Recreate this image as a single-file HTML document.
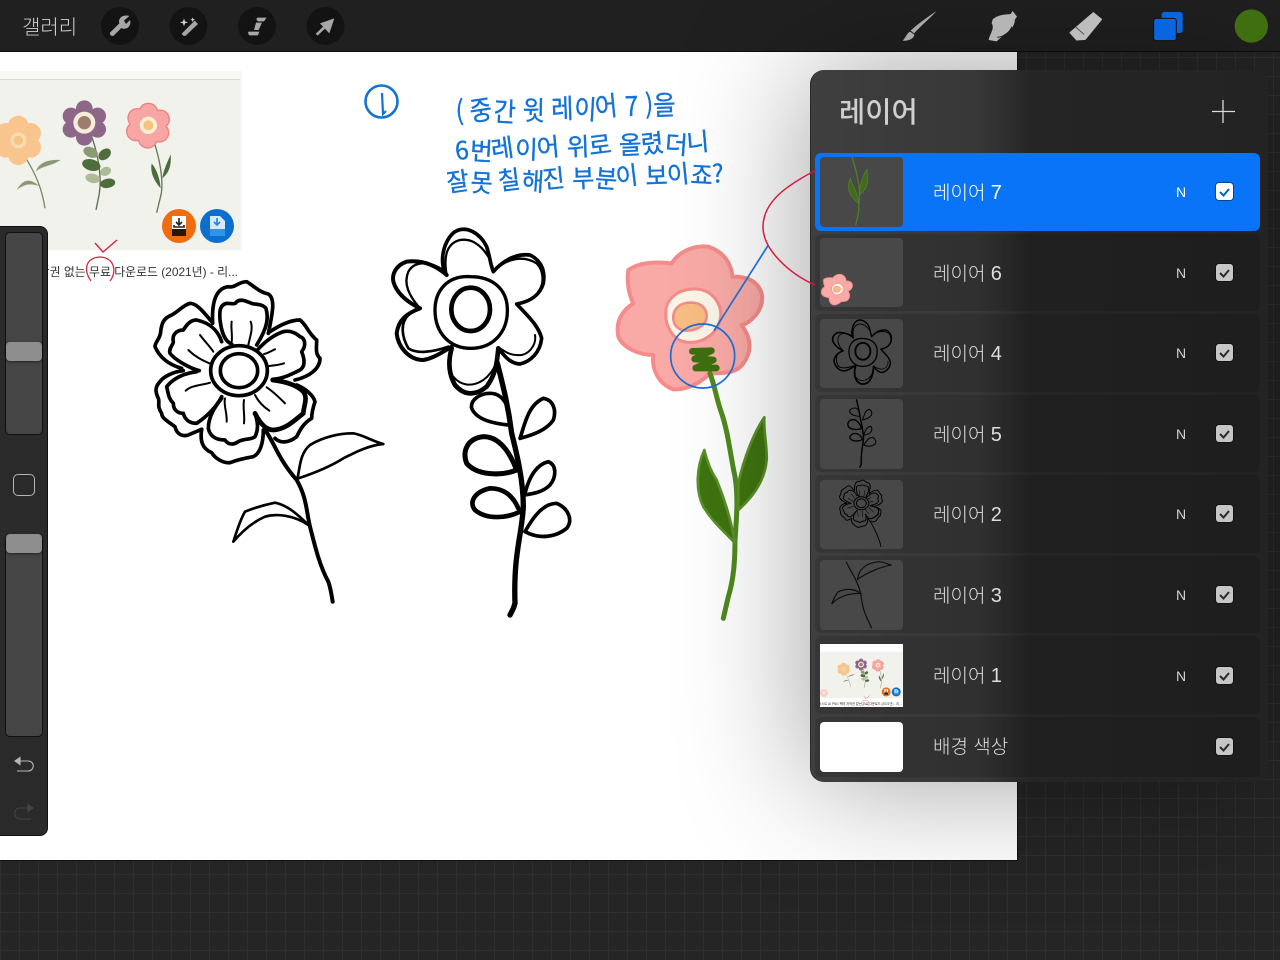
<!DOCTYPE html>
<html lang="ko">
<head>
<meta charset="utf-8">
<title>레이어</title>
<style>
html,body{margin:0;padding:0;width:1280px;height:960px;overflow:hidden}
body{position:relative;background-color:#252525;background-image:linear-gradient(#2f2f2f 1px,transparent 1px),linear-gradient(90deg,#2f2f2f 1px,transparent 1px);background-size:19px 19px;font-family:"Liberation Sans","Noto Sans CJK KR",sans-serif}
.abs{position:absolute}
#canvas{left:0;top:52px;width:1017px;height:808px;background:#fff;box-shadow:0 0 0 1px #111}
#art{left:0;top:0;width:1280px;height:960px}
#top{left:0;top:0;width:1280px;height:52px;background:#202020;border-bottom:1px solid #0c0c0c;box-sizing:border-box}
#gal{left:22px;top:12px;font:300 20px/28px "Noto Sans CJK KR",sans-serif;color:#d0d0d0}
#tool{left:0;top:227px;width:47px;height:608px;background:#2a2a2a;border-radius:0 7px 7px 0;box-shadow:0 0 0 1px #111}
.sl{position:absolute;left:5px;width:36px;height:201px;background:#454545;border:1px solid #101010;border-radius:5px}
.th{position:absolute;left:6px;width:36px;height:19px;background:#8d8d8d;border-radius:4px;box-shadow:0 1px 2px rgba(0,0,0,.5)}
#sq{position:absolute;left:13px;top:247px;width:20px;height:20px;border:1px solid #b5b5b5;border-radius:5px}
#panel{left:810px;top:70px;width:458px;height:712px;border-radius:14px;background:linear-gradient(90deg,#3f3f3f 0,#3b3b3b 18%,#383838 36%,#303030 42%,#252525 48%,#232323 100%);box-shadow:inset 1px 0 0 rgba(0,0,0,.35),0 0 240px rgba(0,0,0,.38)}
#ptitle{left:839px;top:91px;font:500 28.500px/40px "Noto Sans CJK KR",sans-serif;color:#cfcfcf}
.row{position:absolute;left:815px;width:445px;border-radius:6px;background:rgba(0,0,0,.13)}
.row.on{background:#0a74f8}
.tb{position:absolute;left:820px;width:83px;border-radius:4px;background:#484848}
.lb{position:absolute;left:933px;font:300 19px/28px "Liberation Sans","Noto Sans CJK KR",sans-serif;color:#dedede;white-space:pre}
.lb b{font-weight:400;font-size:20px}
.nn{position:absolute;left:1176px;font:14px/18px "Liberation Sans",sans-serif;color:#d2d2d2}
.cb{position:absolute;left:1216px;width:17px;height:17px;border-radius:3px;background:#c6c6c6;box-shadow:0 0 0 1px rgba(0,0,0,.4)}
#over{left:0;top:0;width:1280px;height:960px;pointer-events:none}
</style>
</head>
<body>
<div class="abs" id="canvas"></div>

<svg class="abs" id="art" viewBox="0 0 1280 960" xmlns="http://www.w3.org/2000/svg">
<defs>
<clipPath id="cvclip"><rect x="0" y="52" width="1017" height="808"/></clipPath>
<clipPath id="t1clip"><rect x="820" y="644" width="83" height="63"/></clipPath>
<g id="photo">
  <rect x="-70" y="71" width="312" height="184" fill="#f8f8f6"/>
  <rect x="-70" y="80" width="310" height="170" fill="#f2f2ec"/>
  <rect x="-70" y="79" width="310" height="1" fill="#ddd8cf"/>
  <g transform="translate(0,60) scale(.33333)">
    <path d="M78,295C105,340 125,380 135,445" stroke="#7b8a64" stroke-width="4" fill="none"/>
    <path d="M108,335C115,310 140,298 182,300C150,320 125,318 108,335Z" fill="#8b9a72"/>
    <path d="M117,378C90,352 68,358 50,390C75,370 95,370 117,378Z" fill="#8b9a72"/>
    <g fill="#f8c58f">
      <circle cx="55" cy="198" r="31"/><circle cx="92" cy="220" r="31"/><circle cx="92" cy="262" r="31"/><circle cx="55" cy="284" r="31"/><circle cx="18" cy="262" r="31"/><circle cx="18" cy="220" r="31"/><circle cx="55" cy="241" r="40"/>
    </g>
    <circle cx="55" cy="241" r="24" fill="#fbdcb0"/><circle cx="55" cy="241" r="14" fill="#f8c486"/>
    <path d="M277,235C295,290 305,350 298,400L288,450" stroke="#5d6e4a" stroke-width="4" fill="none"/>
    <ellipse cx="272" cy="277" rx="23" ry="15" fill="#8a9a72" transform="rotate(25 272 277)"/>
    <ellipse cx="314" cy="283" rx="21" ry="15" fill="#4f6c3c" transform="rotate(-40 314 283)"/>
    <ellipse cx="274" cy="315" rx="28" ry="17" fill="#4f6c3c" transform="rotate(15 274 315)"/>
    <ellipse cx="317" cy="334" rx="17" ry="13" fill="#aebb98" transform="rotate(-25 317 334)"/>
    <ellipse cx="278" cy="355" rx="22" ry="14" fill="#aebb98" transform="rotate(12 278 355)"/>
    <ellipse cx="323" cy="370" rx="23" ry="14" fill="#4f6c3c" transform="rotate(-10 323 370)"/>
    <g fill="#8d6688">
      <circle cx="253" cy="146" r="25"/><circle cx="293" cy="168" r="25"/><circle cx="293" cy="208" r="25"/><circle cx="253" cy="232" r="25"/><circle cx="213" cy="208" r="25"/><circle cx="213" cy="168" r="25"/><circle cx="253" cy="188" r="38"/>
    </g>
    <circle cx="253" cy="188" r="33" fill="#f6ecdc"/><circle cx="253" cy="188" r="20" fill="#9d7d6e"/>
    <path d="M462,245C480,300 490,360 484,400L470,458" stroke="#67784f" stroke-width="4" fill="none"/>
    <path d="M487,355C490,330 505,300 512,283C515,320 505,340 487,355Z" fill="#4a6b3b"/>
    <path d="M482,385C460,360 450,335 455,310C472,330 480,360 482,385Z" fill="#4a6b3b"/>
    <g fill="#ef8181">
      <circle cx="445" cy="158" r="30"/><circle cx="480" cy="178" r="30"/><circle cx="478" cy="218" r="30"/><circle cx="443" cy="236" r="30"/><circle cx="408" cy="214" r="30"/><circle cx="412" cy="174" r="30"/>
    </g>
    <g fill="#f8a6a4">
      <circle cx="445" cy="158" r="26"/><circle cx="480" cy="178" r="26"/><circle cx="478" cy="218" r="26"/><circle cx="443" cy="236" r="26"/><circle cx="408" cy="214" r="26"/><circle cx="412" cy="174" r="26"/>
      <circle cx="445" cy="196" r="36"/>
    </g>
    <circle cx="445" cy="196" r="26" fill="#fbefd8"/><circle cx="445" cy="196" r="15" fill="#f8c27f"/>
  </g>
  <circle cx="179" cy="226" r="17" fill="#ef6c10"/>
  <path d="M172,216h14v19h-14z" fill="#fff"/><rect x="172" y="229" width="14" height="7" fill="#2a1608"/>
  <path d="M179,218v6m-3,-2l3,3l3,-3M174,225v2h10v-2" stroke="#222" stroke-width="1.600" fill="none"/>
  <circle cx="217" cy="226" r="17" fill="#0a6fce"/>
  <path d="M210,216h10l5,5v15h-15z" fill="#d4e9fb"/><rect x="210" y="229" width="15" height="7" fill="#2a95ea"/>
  <path d="M217,218v6m-3,-2l3,3l3,-3" stroke="#1f84d9" stroke-width="1.600" fill="none"/>
  <rect x="-70" y="250" width="312" height="40" fill="#fff"/>
  <text x="238" y="276" text-anchor="end" font-family="'Liberation Sans','Noto Sans CJK KR',sans-serif" font-size="11.900" fill="#333">무료 꽃 일러스트 AI PNG 벡터 저작권 없는 무료 다운로드 (2021년) - 리...</text>
  <path d="M91,281C84,272 84,258 100,257C115,258 117,272 110,281" stroke="#d9263c" stroke-width="1.300" fill="none"/>
  <path d="M95,243L103,252L117,240" stroke="#d9263c" stroke-width="1.400" fill="none"/>
</g>

<g id="f1head" fill="none" stroke="#000" stroke-linecap="round" stroke-linejoin="round" stroke-width="11">
  <path d="M218,160C215,100 225,55 265,50C285,55 295,35 320,35C345,50 355,65 385,72C405,85 400,120 385,190"/>
  <path d="M275,222C255,215 245,190 240,150C238,120 240,105 260,100C275,100 285,105 290,95C305,85 320,95 335,100C350,105 365,100 378,115C385,140 385,170 350,225"/>
  <path d="M215,155C190,125 170,100 150,100C130,105 115,125 95,135C70,145 65,160 62,185C62,205 45,215 45,230C60,265 90,285 125,295"/>
  <path d="M245,215C235,185 215,160 170,150C150,150 140,165 130,180C110,180 95,195 100,215C100,225 85,235 90,250C105,270 150,295 178,302"/>
  <path d="M390,185C420,165 450,150 480,150C500,165 505,190 530,210C530,235 525,250 540,265C540,295 510,320 465,330"/>
  <path d="M352,240C375,215 400,195 430,185C450,180 470,190 480,200C495,205 500,225 485,245C495,270 495,290 480,300C450,315 430,325 398,328"/>
  <path d="M130,302C100,305 70,320 60,335C45,350 45,365 55,385C60,395 50,410 65,430C65,445 85,455 105,470C110,495 130,500 145,495L185,478"/>
  <path d="M170,305C130,310 100,325 80,350C85,370 85,385 100,400C100,425 120,430 130,430C135,450 150,460 170,460C200,440 230,410 245,380"/>
  <path d="M470,345C495,355 520,375 525,395C520,410 515,425 515,445C490,460 480,480 470,500C445,520 420,520 405,505"/>
  <path d="M398,330C440,335 470,345 490,365C505,385 490,410 490,430C470,445 440,478 400,480C385,480 365,470 345,430" stroke-width="14"/>
  <path d="M185,478C180,510 185,535 215,548C225,565 250,580 270,578C290,570 310,565 340,560C360,550 370,520 370,480"/>
  <path d="M245,385C225,410 205,440 205,475C210,500 230,510 255,510C265,525 280,525 295,515C310,505 335,510 345,500C355,480 355,460 345,430"/>
  <g stroke-width="6">
    <path d="M275,155C272,175 278,195 275,215"/><path d="M332,155C340,175 330,200 325,225"/>
    <path d="M180,195C195,215 210,230 220,245"/><path d="M145,240C165,260 185,270 208,280"/>
    <path d="M372,252C385,250 395,242 405,238"/><path d="M388,288C400,286 420,285 432,280"/>
    <path d="M137,362C155,345 190,345 210,338"/>
    <path d="M380,352C400,365 420,385 435,400"/><path d="M345,375C355,395 370,410 388,422"/>
    <path d="M255,385C250,405 262,430 260,455"/><path d="M312,390C308,415 315,435 312,460"/>
  </g>
  <ellipse cx="297" cy="302" rx="85" ry="75"/>
  <ellipse cx="297" cy="302" rx="56" ry="51"/>
</g>
<g id="f1stem" fill="none" stroke="#000" stroke-linecap="round" stroke-linejoin="round" stroke-width="8">
  <path d="M375,480C405,520 410,560 470,630C500,680 500,730 510,770C525,830 540,890 565,935C572,955 575,975 578,995" stroke-width="12"/>
  <path d="M472,628C480,590 480,550 510,525C550,500 600,490 640,490C670,495 700,515 730,522C690,525 650,545 610,565C570,590 520,610 475,625Z"/>
  <path d="M505,765C470,730 440,705 405,698C370,705 340,715 315,725C300,750 290,785 280,815C310,780 340,755 375,740C410,730 460,735 505,765Z"/>
</g>

<g id="f2head" fill="none" stroke="#000" stroke-linecap="round" stroke-linejoin="round" stroke-width="10">
  <path d="M200,165C175,130 190,60 225,35C260,15 300,40 320,80C330,110 330,130 340,155C370,120 410,100 450,105C490,125 495,160 490,190C480,225 450,245 410,252C440,285 475,315 485,355C480,400 450,425 420,432C390,430 375,410 355,385" stroke-width="11"/>
  <path d="M200,165C190,110 200,70 240,60C270,55 300,70 325,110" stroke-width="7"/>
  <path d="M345,150C380,115 430,105 470,130C490,150 495,190 475,215" stroke-width="7"/>
  <path d="M465,345C470,375 445,410 410,405C390,405 375,395 360,385" stroke-width="6"/>
  <path d="M200,165C160,130 120,120 80,125C50,135 35,160 40,185C50,220 80,245 120,265C80,280 55,300 50,340C55,385 90,420 130,420C160,415 190,395 215,380" stroke-width="12"/>
  <path d="M190,150C150,125 105,120 85,155C70,190 85,225 120,265" stroke-width="7"/>
  <path d="M85,285C60,310 65,350 85,385C105,400 150,400 205,380" stroke-width="8"/>
  <path d="M215,385C205,420 205,460 225,495C250,525 285,530 320,500C345,465 350,440 355,385" stroke-width="14"/>
  <path d="M220,470C245,500 280,500 310,480C330,465 340,450 348,430" stroke-width="6"/>
  <path d="M272,170C200,165 165,215 165,270C165,340 210,385 272,385C340,385 385,335 382,265C380,205 335,170 272,170Z"/>
  <ellipse cx="272" cy="268" rx="58" ry="65" stroke-width="14"/>
</g>
<g id="f2stem" fill="none" stroke="#000" stroke-linecap="round" stroke-linejoin="round" stroke-width="11">
  <path d="M352,430C370,500 385,560 395,640C410,700 430,780 430,860C425,950 400,1000 405,1150C400,1170 395,1175 390,1185" stroke-width="16"/>
  <path d="M385,615C340,610 290,600 275,565C270,540 300,520 330,520C355,520 370,535 380,555"/>
  <path d="M420,655C435,610 445,555 490,535C520,540 530,570 520,600C500,630 460,645 420,655Z"/>
  <path d="M410,750C360,770 290,765 260,730C245,690 265,655 310,650C360,650 390,700 408,745" stroke-width="15"/>
  <path d="M435,820C445,780 465,735 505,725C530,735 530,770 510,795C490,815 465,820 435,825"/>
  <path d="M420,875C380,895 320,900 285,870C265,845 285,815 330,805C375,805 400,830 415,865" stroke-width="14"/>
  <path d="M435,935C460,890 490,850 530,850C565,865 580,900 560,925C530,950 480,960 435,935Z"/>
</g>

<g id="f3head" stroke-linejoin="round">
  <path d="M85,330C120,305 170,305 215,310C240,270 290,255 325,260C370,275 395,310 397,350C430,350 470,355 485,400C495,450 450,490 425,495C450,530 460,570 430,610C410,640 370,640 330,640C300,670 260,690 220,688C170,670 155,620 160,585C120,585 70,565 55,530C45,480 70,450 100,430C85,400 80,360 85,330Z" fill="#f9aaa6" stroke="#f58c8a" stroke-width="12"/>
  <path d="M280,387C335,385 365,430 362,470C355,520 310,550 265,547C220,545 195,500 197,455C200,415 235,388 280,387Z" fill="#fbf5e8" stroke="#f58c8a" stroke-width="9"/>
  <path d="M265,428C295,425 320,440 320,468C320,495 290,512 260,512C235,512 218,495 220,468C222,445 240,430 265,428Z" fill="#f8bd82" stroke="#f58c8a" stroke-width="8"/>
</g>
<g id="f3stem">
  <path d="M330,640C345,680 350,720 365,760C385,820 390,880 405,950C415,1010 410,1070 405,1140C405,1210 400,1260 385,1310L370,1375" fill="none" stroke="#4f8a1e" stroke-width="15" stroke-linecap="round"/>
  <path d="M313,870C290,920 285,990 310,1040C340,1090 380,1120 405,1150C395,1090 375,1020 350,960C330,930 320,900 313,870Z" fill="#3f7410" stroke="#5a9028" stroke-width="8" stroke-linejoin="round"/>
  <path d="M493,772C460,820 430,900 415,970L415,1050C460,1010 495,960 500,900C502,860 490,810 493,772Z" fill="#3f7410" stroke="#5a9028" stroke-width="8" stroke-linejoin="round"/>
</g>
</defs>

<g clip-path="url(#cvclip)">
  <use href="#photo"/>
  <g transform="translate(140,270) scale(.33333)"><use href="#f1head"/><use href="#f1stem"/></g>
  <g transform="translate(380,220) scale(.33333)"><use href="#f2head"/><use href="#f2stem"/></g>
  <g transform="translate(600,160) scale(.33333)">
    <use href="#f3head"/>
    <use href="#f3stem"/>
    <path d="M277,574L334,572L284,597L340,600L287,624L349,624" fill="none" stroke="#3d7010" stroke-width="20" stroke-linejoin="round" stroke-linecap="round"/>
  </g>
  <g fill="#1272d8" stroke="#1272d8" stroke-width=".35" font-family="'WenQuanYi Zen Hei','Noto Sans CJK KR',sans-serif">
    <text transform="translate(456,122) rotate(-2)" font-size="27" textLength="220" lengthAdjust="spacingAndGlyphs" rotate="0 0 -6 5 0 4 -5 0 6 -4 5 0 -3 0 0 5">( 중간 윗 레이어 7 )을</text>
    <text transform="translate(456,160) rotate(-2)" font-size="25" textLength="254" lengthAdjust="spacingAndGlyphs" rotate="-4 5 -6 4 -3 6 0 -5 5 0 -4 6 -3 5 -6 4">6번레이어 위로 올렸더니</text>
    <text transform="translate(448,192) rotate(-2)" font-size="25" textLength="276" lengthAdjust="spacingAndGlyphs" rotate="-6 5 0 -5 6 -4 5 0 6 -5 4 0 -4 5 0 8">잘못 칠해진 부분이 보이죠?</text>
  </g>
  <circle cx="381.500" cy="101.500" r="16" fill="none" stroke="#1272d8" stroke-width="2.600"/>
  <path d="M382,93L383,114L386,111" fill="none" stroke="#1272d8" stroke-width="2.200"/>
</g>
</svg>

<div class="abs" id="top"></div>
<div class="abs" id="gal">갤러리</div>

<div class="abs" id="tool">
  <div class="sl" style="top:5px"></div>
  <div class="th" style="top:115px"></div>
  <div id="sq"></div>
  <div class="sl" style="top:307px"></div>
  <div class="th" style="top:307px"></div>
</div>

<div class="abs" id="panel"></div>
<div class="abs" id="ptitle">레이어</div>

<div class="row on" style="top:153px;height:78px"></div>
<div class="row" style="top:234px;height:77px"></div>
<div class="row" style="top:314px;height:78px"></div>
<div class="row" style="top:395px;height:77px"></div>
<div class="row" style="top:475px;height:78px"></div>
<div class="row" style="top:556px;height:77px"></div>
<div class="row" style="top:636px;height:78px"></div>
<div class="row" style="top:717px;height:60px"></div>

<div class="tb" style="top:157px;height:70px"></div>
<div class="tb" style="top:238px;height:69px"></div>
<div class="tb" style="top:319px;height:69px"></div>
<div class="tb" style="top:399px;height:70px"></div>
<div class="tb" style="top:480px;height:69px"></div>
<div class="tb" style="top:560px;height:70px"></div>
<div class="tb" style="top:644px;height:63px;background:#fff;border-radius:1px"></div>
<div class="tb" style="top:722px;height:50px;background:#fff"></div>

<div class="lb" style="top:179px;color:#fff">레이어 <b>7</b></div>
<div class="lb" style="top:260px">레이어 <b>6</b></div>
<div class="lb" style="top:340px">레이어 <b>4</b></div>
<div class="lb" style="top:421px">레이어 <b>5</b></div>
<div class="lb" style="top:501px">레이어 <b>2</b></div>
<div class="lb" style="top:582px">레이어 <b>3</b></div>
<div class="lb" style="top:662px">레이어 <b>1</b></div>
<div class="lb" style="top:734px">배경 색상</div>

<div class="nn" style="top:183px;color:#fff">N</div>
<div class="nn" style="top:264px">N</div>
<div class="nn" style="top:344px">N</div>
<div class="nn" style="top:425px">N</div>
<div class="nn" style="top:505px">N</div>
<div class="nn" style="top:586px">N</div>
<div class="nn" style="top:667px">N</div>

<div class="cb" style="top:183px;background:#fff"></div>
<div class="cb" style="top:264px"></div>
<div class="cb" style="top:344px"></div>
<div class="cb" style="top:425px"></div>
<div class="cb" style="top:505px"></div>
<div class="cb" style="top:586px"></div>
<div class="cb" style="top:667px"></div>
<div class="cb" style="top:738px"></div>

<svg class="abs" id="over" viewBox="0 0 1280 960" xmlns="http://www.w3.org/2000/svg">
  <!-- top bar left buttons -->
  <g fill="#131313">
    <circle cx="120" cy="26" r="19"/><circle cx="188.500" cy="26" r="19"/><circle cx="257" cy="26" r="19"/><circle cx="325.500" cy="26" r="19"/>
  </g>
  <g transform="scale(.33333)" fill="#a6a6a6">
    <path d="M330,98L358,70C353,55 368,42 388,48L372,62L378,72L390,60C396,78 378,92 364,84L340,108Q328,108 330,98Z"/>
    <path d="M546,100L584,62L594,72L556,108Q546,108 546,100Z"/>
    <path d="M552,55l3,9l9,3l-9,3l-3,9l-3,-9l-9,-3l9,-3Z" fill="#d0d0d0"/>
    <path d="M578,52l2,5l5,2l-5,2l-2,5l-2,-5l-5,-2l5,-2Z" fill="#d0d0d0"/>
    <path d="M772,53H800L792,64H774Q766,58 772,53Z"/>
    <path d="M768,68H786L776,90H762Z"/>
    <path d="M746,95H778L774,106H748Q742,100 746,95Z"/>
    <path d="M1003,55L960,70L988,100Z"/>
    <path d="M950,104L975,80" stroke="#a6a6a6" stroke-width="8" fill="none"/>
  </g>
  <!-- right tools -->
  <g transform="translate(880,0) scale(.33333)">
    <path d="M170,33C150,55 120,80 102,100L92,92C115,70 145,50 170,33Z" fill="#a9a9a9"/>
    <path d="M90,95C80,100 78,112 68,122C85,124 102,116 103,104Z" fill="#a9a9a9"/>
    <path d="M338,58C358,42 378,44 392,42L398,33L411,50L405,58C404,78 392,92 372,104L350,124L326,120C330,100 345,85 335,70Z" fill="#b5b5b5"/>
    <path d="M352,112C372,110 388,98 396,80" stroke="#1c1c1c" stroke-width="3" fill="none"/>
    <path d="M640,38L665,58L616,118L590,120L570,98Z" fill="#bdbdbd" stroke="#bdbdbd" stroke-width="3" stroke-linejoin="round"/>
    <path d="M586,80L612,103" stroke="#555" stroke-width="3"/>
    <rect x="845" y="36" width="63" height="63" rx="8" fill="#0a66e0"/>
    <rect x="821" y="55" width="68" height="67" rx="8" fill="#0a66e0" stroke="#111" stroke-width="3"/>
    <circle cx="1114" cy="78" r="50" fill="#3f6f10"/>
  </g>

  <!-- left toolbar arrows -->
  <g fill="none" stroke-width="1.100">
    <path d="M18,761H28C35,761 35,771 28,771H17" stroke="#b7b7b7"/>
    <path d="M20,757.500L15,761L20,764.500Z" fill="#b7b7b7" stroke="#b7b7b7"/>
    <path d="M30,808H20C13,808 13,819 20,819H31" stroke="#444"/>
    <path d="M28,804.500L33,808L28,811.500Z" fill="#444" stroke="#444"/>
  </g>

  <!-- plus -->
  <path d="M1223,100V123M1212,111.500H1235" stroke="#dcdcdc" stroke-width="1.300"/>

  <!-- thumbnails -->
  <g transform="translate(821.500,97.800) scale(.0925)" opacity=".8"><use href="#f3stem"/></g>
  <g transform="translate(817.600,255.700) scale(.0716)"><use href="#f3head"/></g>
  <g transform="translate(827.500,316.400) scale(.13)"><use href="#f2head"/></g>
  <g transform="translate(825.200,361.700) scale(.089)"><use href="#f2stem"/></g>
  <g transform="translate(835.500,477) scale(.087)">
    <use href="#f1head"/>
    <path d="M375,480C410,520 500,680 523,805" fill="none" stroke="#000" stroke-width="10"/>
  </g>
  <g transform="translate(810,550) scale(.33333)" fill="none" stroke="#0d0d0d" stroke-width="3.500">
    <path d="M108,35C125,70 150,100 155,150C160,190 175,210 185,235"/>
    <path d="M143,88C145,60 165,40 205,35C225,35 235,45 245,45C215,50 175,65 143,88Z"/>
    <path d="M152,130C130,115 110,115 85,125C75,135 70,150 65,162C85,140 115,130 152,130Z"/>
  </g>
  <g clip-path="url(#t1clip)">
    <rect x="820" y="644" width="83" height="63" fill="#fff"/>
    <g transform="translate(838.700,632) scale(.265)"><use href="#photo"/></g>
    <circle cx="824" cy="693" r="4" fill="#f8d0c8"/>
    <circle cx="824" cy="693" r="1.500" fill="#fbe8dc"/>
  </g>

  <!-- checks -->
  <g fill="none" stroke-width="2">
    <path d="M1220,192L1223.500,195.500L1229,189" stroke="#0a5fc8"/>
    <path d="M1220,273L1223.500,276.500L1229,270" stroke="#2a2a2a"/>
    <path d="M1220,353L1223.500,356.500L1229,350" stroke="#2a2a2a"/>
    <path d="M1220,434L1223.500,437.500L1229,431" stroke="#2a2a2a"/>
    <path d="M1220,514L1223.500,517.500L1229,511" stroke="#2a2a2a"/>
    <path d="M1220,595L1223.500,598.500L1229,592" stroke="#2a2a2a"/>
    <path d="M1220,676L1223.500,679.500L1229,673" stroke="#2a2a2a"/>
    <path d="M1220,747L1223.500,750.500L1229,744" stroke="#2a2a2a"/>
  </g>

  <!-- annotations -->
  <path d="M816,170C790,184 763,200 763,227C763,250 790,274 815,285" fill="none" stroke="#d81b3c" stroke-width="1.500"/>
  <g transform="translate(600,160) scale(.33333)" fill="none" stroke="#1a6cd4">
    <circle cx="308" cy="588" r="96" stroke-width="5"/>
    <path d="M342,512L505,255" stroke-width="5"/>
  </g>
</svg>
</body>
</html>
